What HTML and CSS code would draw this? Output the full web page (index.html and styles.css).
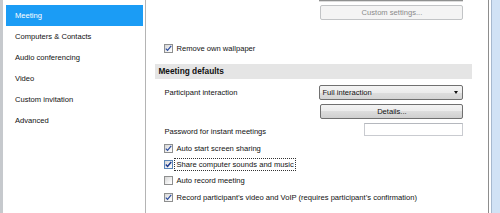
FILE: index.html
```html
<!DOCTYPE html>
<html>
<head>
<meta charset="utf-8">
<link rel="stylesheet" href="styles.css">
</head>
<body>
<div class="window">
  <div class="edge"></div>
  <nav class="sidebar">
    <div class="item active">Meeting</div>
    <div class="item">Computers &amp; Contacts</div>
    <div class="item">Audio conferencing</div>
    <div class="item">Video</div>
    <div class="item">Custom invitation</div>
    <div class="item">Advanced</div>
  </nav>
  <main class="content">
    <div class="topline"></div>
    <div class="btn disabled custom">Custom settings...</div>
    <div class="row check first">
      <span class="cb"><svg viewBox="0 0 9 9" width="7" height="7"><path d="M1 4.6 L3.3 7 L8 1.2" fill="none" stroke="#2b4c9f" stroke-width="1.5"/></svg></span>
      <span>Remove own wallpaper</span>
    </div>
    <div class="section">Meeting defaults</div>
    <div class="row field top">
      <span class="label">Participant interaction</span>
      <div class="select"><span>Full interaction</span><span class="arrow"></span></div>
    </div>
    <div class="row field">
      <span class="label"></span>
      <div class="btn details">Details...</div>
    </div>
    <div class="row field pw">
      <span class="label">Password for instant meetings</span>
      <div class="input"></div>
    </div>
    <div class="checks">
      <div class="row check">
        <span class="cb"><svg viewBox="0 0 9 9" width="7" height="7"><path d="M1 4.6 L3.3 7 L8 1.2" fill="none" stroke="#2b4c9f" stroke-width="1.5"/></svg></span>
        <span>Auto start screen sharing</span>
      </div>
      <div class="row check">
        <span class="cb hot"><svg viewBox="0 0 9 9" width="7" height="7"><path d="M1 4.6 L3.3 7 L8 1.2" fill="none" stroke="#1d3b8f" stroke-width="1.9"/></svg></span>
        <span class="focus">Share computer sounds and music</span>
      </div>
      <div class="row check">
        <span class="cb"></span>
        <span>Auto record meeting</span>
      </div>
      <div class="row check">
        <span class="cb"><svg viewBox="0 0 9 9" width="7" height="7"><path d="M1 4.6 L3.3 7 L8 1.2" fill="none" stroke="#2b4c9f" stroke-width="1.5"/></svg></span>
        <span>Record participant’s video and VoIP (requires participant’s confirmation)</span>
      </div>
    </div>
  </main>
  <div class="scroll"><div class="thumb"></div></div>
</div>
</body>
</html>
```
FILE: styles.css
```css
html, body {
  margin: 0;
  padding: 0;
  background: #fff;
}
body {
  width: 500px;
  height: 213px;
  overflow: hidden;
  font-family: "Liberation Sans", Arial, sans-serif;
  font-size: 7.6px;
  color: #111;
}
.window {
  display: flex;
  height: 213px;
}
.edge {
  width: 3px;
  background: #c6c9cd;
}
.sidebar {
  width: 138px;
  padding: 5px 2px 0 3px;
  border-right: 1px solid #b4b4b4;
  background: #fff;
}
.item {
  height: 21px;
  line-height: 21px;
  padding-left: 9px;
  white-space: nowrap;
}
.item.active {
  background: #1b9cf5;
  color: #fff;
}
.content {
  width: 343px;
  display: flex;
  flex-direction: column;
}
.topline {
  height: 1px;
  margin-left: 173px;
  width: 144px;
  background: #8f9090;
  box-shadow: 0 1px 0 #dcdcdc;
}
.btn {
  box-sizing: border-box;
  height: 15px;
  border: 1px solid #707070;
  border-radius: 2px;
  background: linear-gradient(#f3f3f3, #ebebeb 50%, #dddddd 50%, #cfcfcf);
  display: flex;
  align-items: center;
  justify-content: center;
  white-space: nowrap;
}
.btn.disabled {
  border-color: #c2c4c6;
  background: #f4f4f4;
  color: #8a8a8a;
}
.custom {
  margin: 4px 0 0 174px;
  width: 143px;
}
.row {
  display: flex;
  align-items: center;
  white-space: nowrap;
}
.check {
  height: 16px;
  margin-left: 18px;
}
.check.first {
  margin-top: 20px;
}
.cb {
  box-sizing: border-box;
  width: 9px;
  height: 9px;
  border: 1px solid #8e8f8f;
  background: linear-gradient(135deg, #d6d6d6, #f6f6f6 70%, #fff);
  margin-right: 3px;
  display: flex;
  align-items: center;
  justify-content: center;
  flex: none;
}
.cb.hot {
  border-color: #5b86b8;
}
.focus {
  outline: 1px dotted #333;
  outline-offset: 1px;
}
.section {
  margin: 8px 0 0 9px;
  width: 317px;
  height: 15px;
  line-height: 15px;
  background: #e5e5e5;
  padding-left: 3px;
  box-sizing: border-box;
  font-weight: bold;
  font-size: 8.3px;
  color: #111;
}
.field {
  margin-left: 18px;
  margin-top: 4px;
}
.field.top {
  margin-top: 6px;
}
.label {
  width: 155px;
}
.select {
  box-sizing: border-box;
  width: 144px;
  height: 15px;
  border: 1px solid #707070;
  border-radius: 2px;
  background: linear-gradient(#f4f4f4, #ececec 50%, #dedede 50%, #d4d4d4);
  display: flex;
  align-items: center;
  justify-content: space-between;
  padding: 0 4px 0 2px;
}
.arrow {
  width: 0;
  height: 0;
  border-left: 2.5px solid transparent;
  border-right: 2.5px solid transparent;
  border-top: 3.5px solid #111;
}
.details {
  width: 143px;
  margin-left: 1px;
}
.pw .label {
  width: 200px;
  padding-top: 4px;
}
.input {
  box-sizing: border-box;
  width: 99px;
  height: 13px;
  border: 1px solid #c9cbd0;
  border-top-color: #b5b8be;
  background: #fff;
}
.checks {
  margin-top: 4px;
  display: flex;
  flex-direction: column;
}
.checks .check {
  height: 16.3px;
}
.scroll {
  width: 9px;
  border-left: 1px solid #8d8d8d;
  background: #fff;
  padding-left: 2px;
}
.thumb {
  height: 100%;
  border-left: 1px solid #a7b9cf;
  background: #d1e2f5;
}
```
